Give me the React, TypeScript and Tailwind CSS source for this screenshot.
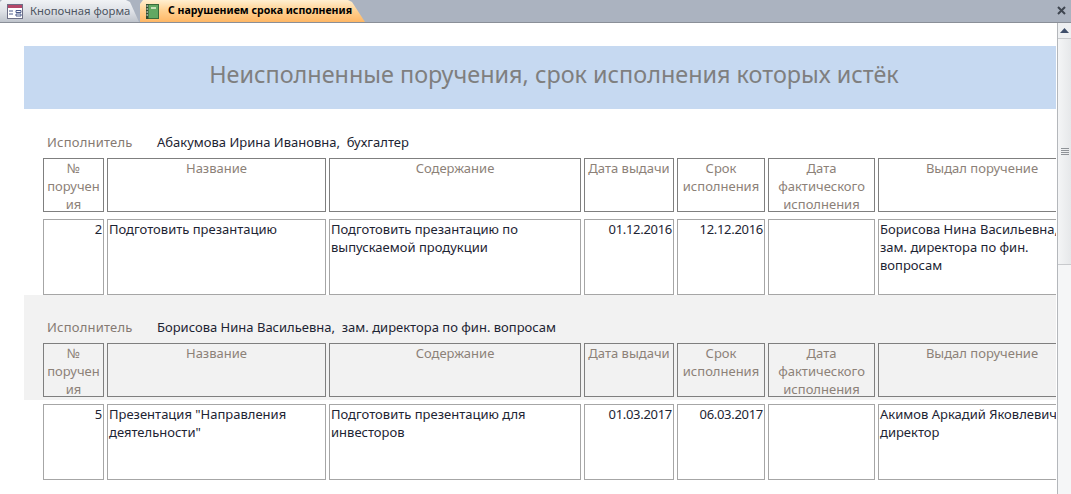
const font = "font-['Tahoma','Noto_Sans','DejaVu_Sans',sans-serif]";

const headers = ["№ поручения", "Название", "Содержание", "Дата выдачи", "Срок исполнения", "Дата фактического исполнения", "Выдал поручение"];

const cols = "grid grid-cols-[61px_219px_252px_90px_88px_107px_208px] gap-x-[3px]";

type Row = {
  person: string;
  num: string;
  name: string;
  text: string;
  issued: string;
  due: string;
  by: string;
};

const rows: Row[] = [
  {
    person: "Абакумова Ирина Ивановна,  бухгалтер",
    num: "2",
    name: "Подготовить презантацию",
    text: "Подготовить презантацию по выпускаемой продукции",
    issued: "01.12.2016",
    due: "12.12.2016",
    by: "Борисова Нина Васильевна, зам. директора по фин. вопросам",
  },
  {
    person: "Борисова Нина Васильевна,  зам. директора по фин. вопросам",
    num: "5",
    name: 'Презентация "Направления деятельности"',
    text: "Подготовить презентацию для инвесторов",
    issued: "01.03.2017",
    due: "06.03.2017",
    by: "Акимов Аркадий Яковлевич, директор",
  },
];

function Group({ row, shaded }: { row: Row; shaded?: boolean }) {
  return (
    <div>
      <div className={`h-[105px] pl-[19px] pb-[3px] flex flex-col justify-end ${shaded ? "bg-[#f2f2f2]" : ""}`}>
        <div className="flex items-center h-[20px] mb-[5px] whitespace-pre">
          <span className="w-[114px] pl-[4px] text-[#857a72] tracking-[0.2px]">Исполнитель</span>
          <span className="text-[#1d2433]">{row.person}</span>
        </div>
        <div className={cols}>
          {headers.map((h) => (
            <div key={h} className="h-[54px] border border-[#7f7f7f] text-center text-[#8c8178] leading-[18px] overflow-hidden">
              {h === "№ поручения" ? (
                <>№<br />поручен<br />ия</>
              ) : (
                h
              )}
            </div>
          ))}
        </div>
      </div>
      <div className={`${cols} pl-[19px] pt-[4px] text-[#1d2433] leading-[18px]`}>
        <Cell right>{row.num}</Cell>
        <Cell>{row.name}</Cell>
        <Cell>{row.text}</Cell>
        <Cell right>{row.issued}</Cell>
        <Cell right>{row.due}</Cell>
        <Cell />
        <Cell>{row.by}</Cell>
      </div>
    </div>
  );
}

function Cell({ children, right }: { children?: React.ReactNode; right?: boolean }) {
  return (
    <div className={`h-[76px] border border-[#a6a6a6] px-[1px] ${right ? "text-right tracking-[-0.3px]" : ""}`}>{children}</div>
  );
}

export default function App() {
  return (
    <div className={`w-[1071px] h-[494px] overflow-hidden bg-white text-[13px] ${font}`}>
      {/* Tab strip */}
      <div className="h-[23px] bg-[#abb3c0] border-b border-[#8a8f98] flex items-end relative whitespace-nowrap">
        <div className="w-[139px] h-[22px] flex items-center pl-[7px] gap-[7px] bg-gradient-to-b from-[#f0f2f5] via-[#dfe2e7] to-[#bfc4cc] [clip-path:polygon(0_2px,2px_0,126px_0,130px_2px,139px_22px,0_22px)] text-[#4d5561] text-[11.3px]">
          <FormIcon />
          <span>Кнопочная форма</span>
        </div>
        <div className="ml-[1px] w-[225px] h-[22px] flex items-center pl-[6px] gap-[9px] bg-gradient-to-b from-[#ffefd0] via-[#ffd08f] to-[#ffb765] [clip-path:polygon(0_4px,3px_0,208px_0,212px_2px,225px_22px,0_22px)] text-black font-bold text-[10.6px]">
          <ReportIcon />
          <span>С нарушением срока исполнения</span>
        </div>
        <svg className="absolute right-[4px] top-[5px]" width="11" height="11" viewBox="0 0 11 11">
          <path d="M2 2l7 7M9 2l-7 7" stroke="#3f4650" strokeWidth="2" />
        </svg>
      </div>

      <div className="flex h-[471px]">
        {/* Report body */}
        <div className="w-[1056px] pl-[24px] pt-[23px] overflow-hidden">
          <div className="h-[63px] bg-[#c6d9f1] flex justify-center pl-[28px] pt-[11px] text-[23.4px] leading-[34px] text-[#7f7f7f]">
            Неисполненные поручения, срок исполнения которых истёк
          </div>
          <div className="pt-[1px]">
            <Group row={rows[0]} />
            <Group row={rows[1]} shaded />
          </div>
        </div>

        {/* Scrollbar */}
        <div className="ml-[1px] w-[14px] border-l border-[#b4b7bb] bg-[#f5f6f7] flex flex-col">
          <div className="h-[16px] flex items-center justify-center bg-[#eef0f2] border-b border-[#c8cacd]">
            <svg width="9" height="5" viewBox="0 0 9 5"><path d="M4.5 0L9 5H0z" fill="#3f4f6b" /></svg>
          </div>
          <div className="h-[226px] bg-gradient-to-r from-[#f4f5f6] to-[#e6e8ea] border-b border-[#c8cacd] flex flex-col items-center justify-center gap-[1px]">
            <i className="block w-[8px] h-[1px] bg-[#8f9398]" />
            <i className="block w-[8px] h-[1px] bg-[#8f9398]" />
            <i className="block w-[8px] h-[1px] bg-[#8f9398]" />
            <i className="block w-[8px] h-[1px] bg-[#8f9398]" />
          </div>
        </div>
      </div>
    </div>
  );
}

function FormIcon() {
  return (
    <svg width="16" height="15" viewBox="0 0 16 15">
      <rect x="0.5" y="0.5" width="15" height="14" fill="#fff" stroke="#6d6f86" />
      <rect x="1" y="1" width="14" height="3" fill="#b5486a" />
      <path d="M2 7h4M2 10h4M9 6.5h5v2H9zM9 10h5v2H9z" stroke="#4a5a8a" fill="none" />
    </svg>
  );
}

function ReportIcon() {
  return (
    <svg width="13" height="15" viewBox="0 0 13 15">
      <rect x="0.5" y="0.5" width="12" height="14" fill="#62a862" stroke="#3a6b3a" />
      <rect x="0" y="0" width="2.5" height="15" fill="#2f4a2f" />
      <path d="M0.5 2h1.5M0.5 5h1.5M0.5 8h1.5M0.5 11h1.5" stroke="#fff" />
      <rect x="5" y="3" width="5" height="2" fill="#c7e0b8" />
    </svg>
  );
}
